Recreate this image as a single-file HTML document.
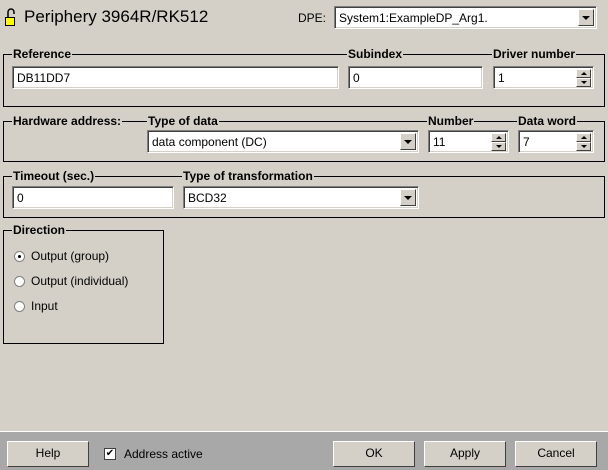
<!DOCTYPE html><html><head><style>
body{margin:0;width:608px;height:470px;background:#d4d0c8;position:relative;overflow:hidden;font-family:"Liberation Sans",sans-serif;font-size:12px;color:#000}
.a{position:absolute}
.g{position:absolute;border:1px solid #000}
.l{position:absolute;background:#d4d0c8;font-weight:bold;font-size:12px;padding:0 1px;line-height:14px}
.in{position:absolute;background:#fff;border-top:1px solid #808080;border-left:1px solid #808080;border-right:1px solid #fff;border-bottom:1px solid #fff;box-shadow:inset 1px 1px 0 #404040,inset -1px -1px 0 #d4d0c8;box-sizing:border-box;padding:4px 0 0 4px;line-height:14px}
.dd{position:absolute;right:2px;top:2px;width:16px;bottom:2px;background:#d4d0c8;border-top:1px solid #fff;border-left:1px solid #fff;border-right:1px solid #404040;border-bottom:1px solid #404040;box-sizing:border-box}
.dd:after{content:"";position:absolute;left:3px;top:6px;border-left:4px solid transparent;border-right:4px solid transparent;border-top:4px solid #000}
.sp{position:absolute;right:2px;width:15px;height:9px;background:#d4d0c8;border-top:1px solid #fff;border-left:1px solid #fff;border-right:1px solid #404040;border-bottom:1px solid #404040;box-sizing:border-box}
.sp.u:after{content:"";position:absolute;left:4px;top:2px;border-left:3px solid transparent;border-right:3px solid transparent;border-bottom:3px solid #000}
.sp.d:after{content:"";position:absolute;left:4px;top:2px;border-left:3px solid transparent;border-right:3px solid transparent;border-top:3px solid #000}
.btn{position:absolute;top:441px;height:26px;width:82px;background:#d4d0c8;border-top:1px solid #fff;border-left:1px solid #fff;border-right:1px solid #404040;border-bottom:1px solid #404040;box-sizing:border-box;text-align:center;line-height:23px}
.r{position:absolute;width:11px;height:11px;border-radius:50%;background:#fff;border:1px solid #808080;box-sizing:border-box}
</style></head><body>
<svg class="a" style="left:5px;top:8px" width="12" height="18"><path d="M3 9 V4 a3 3 0 0 1 6 0 V6" fill="none" stroke="#000" stroke-width="1.5"/><rect x="0.5" y="9.5" width="9" height="8" fill="#ff0" stroke="#000"/></svg>
<div class="a" style="left:24px;top:7px;font-size:17px">Periphery 3964R/RK512</div>
<div class="a" style="left:298px;top:11px">DPE:</div>
<div class="in" style="left:334px;top:6px;width:263px;height:23px">System1:ExampleDP_Arg1.<div class="dd"></div></div>

<div class="g" style="left:3px;top:54px;width:600px;height:51px"></div>
<div class="l" style="left:12px;top:47px">Reference</div>
<div class="l" style="left:347px;top:47px">Subindex</div>
<div class="l" style="left:492px;top:47px">Driver number</div>
<div class="in" style="left:12px;top:66px;width:327px;height:23px">DB11DD7</div>
<div class="in" style="left:348px;top:66px;width:135px;height:23px">0</div>
<div class="in" style="left:493px;top:66px;width:101px;height:23px">1<div class="sp u" style="top:2px"></div><div class="sp d" style="top:11px"></div></div>

<div class="g" style="left:3px;top:121px;width:600px;height:39px"></div>
<div class="l" style="left:12px;top:114px">Hardware address:</div>
<div class="l" style="left:147px;top:114px">Type of data</div>
<div class="l" style="left:427px;top:114px">Number</div>
<div class="l" style="left:517px;top:114px">Data word</div>
<div class="in" style="left:147px;top:130px;width:272px;height:23px">data component (DC)<div class="dd"></div></div>
<div class="in" style="left:428px;top:130px;width:81px;height:23px">11<div class="sp u" style="top:2px"></div><div class="sp d" style="top:11px"></div></div>
<div class="in" style="left:518px;top:130px;width:76px;height:23px">7<div class="sp u" style="top:2px"></div><div class="sp d" style="top:11px"></div></div>

<div class="g" style="left:3px;top:176px;width:600px;height:40px"></div>
<div class="l" style="left:12px;top:169px">Timeout (sec.)</div>
<div class="l" style="left:182px;top:169px">Type of transformation</div>
<div class="in" style="left:12px;top:186px;width:162px;height:23px">0</div>
<div class="in" style="left:183px;top:186px;width:236px;height:23px">BCD32<div class="dd"></div></div>

<div class="g" style="left:3px;top:230px;width:159px;height:112px"></div>
<div class="l" style="left:12px;top:223px">Direction</div>
<div class="r" style="left:14px;top:251px"><div class="a" style="left:3px;top:3px;width:3px;height:3px;background:#000;border-radius:50%"></div></div>
<div class="a" style="left:31px;top:249px">Output (group)</div>
<div class="r" style="left:14px;top:276px"></div>
<div class="a" style="left:31px;top:274px">Output (individual)</div>
<div class="r" style="left:14px;top:301px"></div>
<div class="a" style="left:31px;top:299px">Input</div>

<div class="a" style="left:0;top:431px;width:608px;height:1px;background:#fff"></div>
<div class="a" style="left:0;top:432px;width:608px;height:38px;background:#a8a8a8"></div>
<div class="btn" style="left:7px">Help</div>
<div class="a" style="left:104px;top:448px;width:12px;height:12px;background:#fff;border:1px solid #404040;box-sizing:border-box;font-size:10px;line-height:10px;text-align:center">✔</div>
<div class="a" style="left:124px;top:447px">Address active</div>
<div class="btn" style="left:333px">OK</div>
<div class="btn" style="left:424px">Apply</div>
<div class="btn" style="left:515px">Cancel</div>
</body></html>
